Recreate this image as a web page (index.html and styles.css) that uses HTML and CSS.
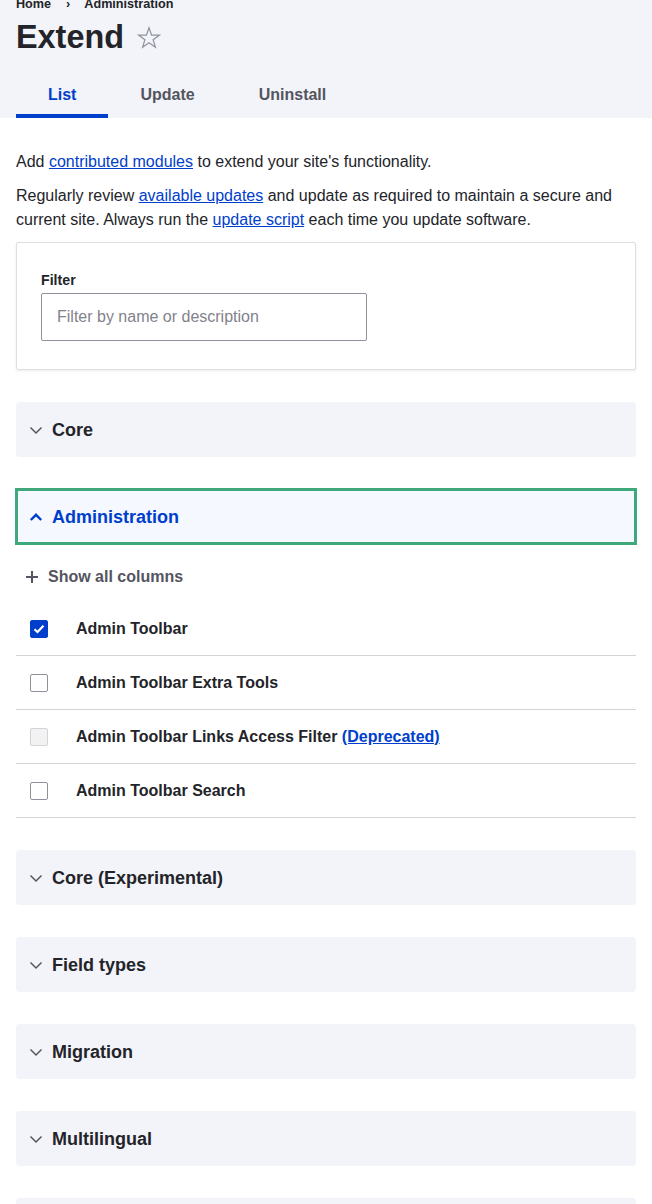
FILE: index.html
```html
<!DOCTYPE html>
<html lang="en">
<head>
<meta charset="utf-8">
<title>Extend</title>
<link rel="stylesheet" href="styles.css">
</head>
<body>
<header class="page-header">
  <nav class="breadcrumb">
    <span>Home</span>
    <span class="sep">›</span>
    <span>Administration</span>
  </nav>
  <div class="title-row">
    <h1 class="title">Extend</h1>
    <svg class="star" width="24" height="24" viewBox="0 0 24 24"><path d="M12 1.8 L14.6 9.1 L22.4 9.1 L16.1 13.8 L18.4 21.3 L12 16.8 L5.6 21.3 L7.9 13.8 L1.6 9.1 L9.4 9.1 Z" fill="none" stroke="#8e929c" stroke-width="1.2" stroke-linejoin="miter"/></svg>
  </div>
  <nav class="tabs">
    <a class="tab active">List</a>
    <a class="tab">Update</a>
    <a class="tab">Uninstall</a>
  </nav>
</header>

<main class="content">
  <p class="intro">Add <a href="#">contributed modules</a> to extend your site's functionality.</p>
  <p class="intro second">Regularly review <a href="#">available updates</a> and update as required to maintain a secure and current site. Always run the <a href="#">update script</a> each time you update software.</p>

  <div class="card">
    <label class="filter-label">Filter</label>
    <div class="input">Filter by name or description</div>
  </div>

  <section class="group">
    <div class="summary">
      <svg class="chev" width="14" height="14" viewBox="0 0 14 14"><path d="M1.5 4.5 L7 10 L12.5 4.5" fill="none" stroke="#545560" stroke-width="1.5"/></svg>
      <span>Core</span>
    </div>
  </section>

  <section class="group open">
    <div class="summary focused">
      <svg class="chev" width="14" height="14" viewBox="0 0 14 14"><path d="M1.8 10 L7 4.8 L12.2 10" fill="none" stroke="#003ecc" stroke-width="2.4"/></svg>
      <span>Administration</span>
    </div>
    <div class="show-cols">
      <svg class="plus" width="14" height="14" viewBox="0 0 14 14"><path d="M7 1 V13 M1 7 H13" stroke="#545560" stroke-width="2"/></svg>
      <span>Show all columns</span>
    </div>
    <div class="rows">
      <div class="row">
        <span class="cb checked"><svg width="12" height="10" viewBox="0 0 12 10"><path d="M1.5 5.2 L4.5 8 L10.5 1.8" fill="none" stroke="#fff" stroke-width="2.2"/></svg></span>
        <span class="name">Admin Toolbar</span>
      </div>
      <div class="row">
        <span class="cb"></span>
        <span class="name">Admin Toolbar Extra Tools</span>
      </div>
      <div class="row">
        <span class="cb disabled"></span>
        <span class="name">Admin Toolbar Links Access Filter <a href="#">(Deprecated)</a></span>
      </div>
      <div class="row">
        <span class="cb"></span>
        <span class="name">Admin Toolbar Search</span>
      </div>
    </div>
  </section>

  <section class="group">
    <div class="summary">
      <svg class="chev" width="14" height="14" viewBox="0 0 14 14"><path d="M1.5 4.5 L7 10 L12.5 4.5" fill="none" stroke="#545560" stroke-width="1.5"/></svg>
      <span>Core (Experimental)</span>
    </div>
  </section>
  <section class="group">
    <div class="summary">
      <svg class="chev" width="14" height="14" viewBox="0 0 14 14"><path d="M1.5 4.5 L7 10 L12.5 4.5" fill="none" stroke="#545560" stroke-width="1.5"/></svg>
      <span>Field types</span>
    </div>
  </section>
  <section class="group">
    <div class="summary">
      <svg class="chev" width="14" height="14" viewBox="0 0 14 14"><path d="M1.5 4.5 L7 10 L12.5 4.5" fill="none" stroke="#545560" stroke-width="1.5"/></svg>
      <span>Migration</span>
    </div>
  </section>
  <section class="group">
    <div class="summary">
      <svg class="chev" width="14" height="14" viewBox="0 0 14 14"><path d="M1.5 4.5 L7 10 L12.5 4.5" fill="none" stroke="#545560" stroke-width="1.5"/></svg>
      <span>Multilingual</span>
    </div>
  </section>
  <section class="group">
    <div class="summary">
      <svg class="chev" width="14" height="14" viewBox="0 0 14 14"><path d="M1.5 4.5 L7 10 L12.5 4.5" fill="none" stroke="#545560" stroke-width="1.5"/></svg>
      <span>Other</span>
    </div>
  </section>
</main>
</body>
</html>
```

FILE: styles.css
```css
* { box-sizing: border-box; }

html, body {
  margin: 0;
  padding: 0;
  background: #fff;
}

body {
  font-family: "Liberation Sans", Arial, sans-serif;
  color: #232429;
  font-size: 16px;
  line-height: 24px;
  overflow: hidden;
  height: 1204px;
}

a { color: #003ecc; text-decoration: underline; }

.page-header {
  display: flow-root;
  background: #f3f4f9;
  padding: 0 16px;
  height: 118px;
}

.breadcrumb {
  margin-top: -6px;
  height: 20px;
  line-height: 20px;
  font-size: 12.64px;
  font-weight: 700;
  color: #232429;
  display: flex;
}
.breadcrumb .sep {
  margin: 0 14px 0 15px;
}

.title-row {
  display: flex;
  align-items: center;
  margin-top: 1px;
  height: 44px;
}
.title {
  margin: 0;
  font-size: 32.4px;
  line-height: 44px;
  font-weight: 700;
  color: #232429;
}
.star {
  margin-left: 13px;
  margin-top: 1px;
}

.tabs {
  display: flex;
  margin-top: 11px;
}
.tab {
  display: block;
  height: 48px;
  padding: 2px 32px 0;
  line-height: 46px;
  font-weight: 700;
  font-size: 16px;
  color: #545560;
  text-decoration: none;
}
.tab.active {
  color: #003ecc;
  box-shadow: inset 0 -4px 0 #003ecc;
}

.content {
  padding: 32px 16px 0;
}

.intro {
  margin: 0 0 10px;
}

.card {
  border: 1px solid #dedfe4;
  border-radius: 2px;
  box-shadow: 0 1px 3px rgba(0, 0, 0, 0.08);
  padding: 28px 24px 28px;
}
.filter-label {
  display: block;
  font-size: 14.2px;
  line-height: 18px;
  font-weight: 700;
  margin-bottom: 4px;
}
.input {
  width: 326px;
  height: 48px;
  border: 1px solid #8e929c;
  border-radius: 2px;
  padding: 0 15px;
  line-height: 46px;
  color: #82828c;
  font-size: 16px;
}

.group {
  margin-top: 32px;
}
.summary {
  height: 55px;
  background: #f3f4f9;
  border-radius: 4px;
  display: flex;
  align-items: center;
  padding-left: 13px;
  gap: 9px;
  font-size: 18px;
  font-weight: 700;
  color: #232429;
}
.summary .chev {
  flex: none;
  margin-top: 1px;
}
.summary.focused {
  background: #f5f8ff;
  color: #003ecc;
  border-radius: 0;
  box-shadow: 0 0 0 1px #3fa97c, inset 0 0 0 2px #3fa97c;
}

.show-cols {
  margin-top: 21px;
  display: flex;
  align-items: center;
  gap: 9px;
  padding-left: 9px;
  height: 24px;
  font-weight: 700;
  color: #545560;
}

.rows {
  margin-top: 13px;
}
.row {
  height: 54px;
  border-bottom: 1px solid #d3d4d9;
  display: flex;
  align-items: center;
  padding-left: 14px;
}
.cb {
  width: 18px;
  height: 18px;
  border: 1px solid #8e929c;
  border-radius: 2px;
  background: #fff;
  flex: none;
  display: flex;
  align-items: center;
  justify-content: center;
  margin-right: 28px;
}
.cb.checked {
  background: #003ecc;
  border-color: #003ecc;
}
.cb.disabled {
  background: #f2f2f3;
  border-color: #d3d4d9;
}
.name {
  font-weight: 700;
  color: #232429;
}
```
